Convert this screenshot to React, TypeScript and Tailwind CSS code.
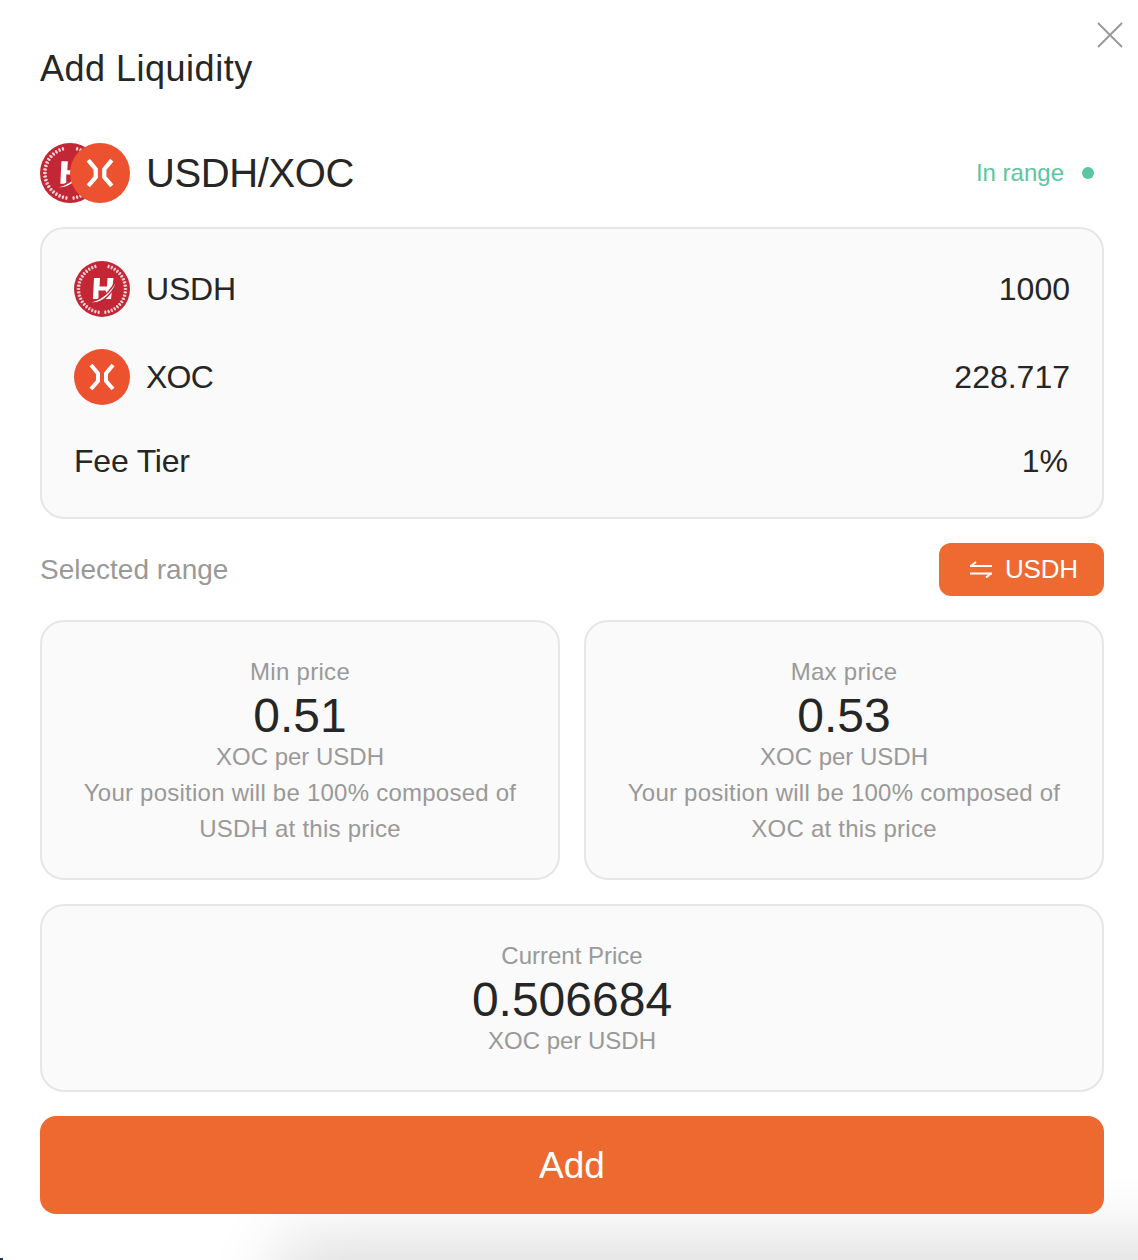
const UsdhIcon = ({ size }: { size: number }) => {
  const dots = Array.from({ length: 44 }, (_, i) => (i * 360) / 44).filter((a) => a > 14 && a < 346 && Math.abs(a - 180) > 5);
  return (
    <svg width={size} height={size} viewBox="0 0 56 56" className="shrink-0">
      <circle cx="28" cy="28" r="28" fill="#c32735" />
      {dots.map((a) => (
        <ellipse key={a} cx="28" cy="4.500" rx="1.100" ry="1.900" fill="#fff" opacity="0.8" transform={`rotate(${a} 28 28)`} />
      ))}
      <path d="M20 17h6l-0.500 8.500h7.500L33.500 17h6l-2.500 21h-5.500l0.500-8.500h-7.500L24.500 38H19z" fill="#fff" />
      <path d="M13 41C25 41 38 31 44 15 42 30 28 46 13 41z" fill="#fff" stroke="#c32735" strokeWidth="1.500" />
    </svg>
  );
};

const XocIcon = ({ size }: { size: number }) => (
  <svg width={size} height={size} viewBox="0 0 56 56" className="shrink-0">
    <circle cx="28" cy="28" r="28" fill="#ec5130" />
    <path d="M17 16l7 8.500v7.500l-7 8M39 16l-7 8.500v7.500l7 8" fill="none" stroke="#fff" strokeWidth="4" />
  </svg>
);

const PriceCard = ({ label, value, note }: { label: string; value: string; note: string }) => (
  <div className="h-[260px] flex-1 rounded-3xl border-2 border-[#e6e6e6] bg-[#fafafa] pt-8 text-center text-[24px] leading-9 text-[#999999]">
    <div className="tracking-[0.3px]">{label}</div>
    <div className="mt-[2px] h-[47px] text-[48px] leading-[48px] text-[#262626]">{value}</div>
    <div>XOC per USDH</div>
    <div className="mx-auto w-[450px] tracking-[0.24px]">{note}</div>
  </div>
);

export default function App() {
  return (
    <div
      className="relative h-[1260px] overflow-hidden bg-white pl-10 pr-[34px] pt-12 text-[#262626]"
      style={{ fontFamily: '"Liberation Sans", Arial, sans-serif' }}
    >
      {/* shadow of the page under the modal */}
      <div className="absolute left-[300px] right-[-100px] top-[1262px] h-[100px] shadow-[0_0_70px_20px_rgba(0,0,0,0.14)]" />
      <div className="absolute bottom-0 left-0 h-[2px] w-[3px] bg-[#2a3a4a]" />

      <button className="absolute right-[15px] top-[22px]">
        <svg width="26" height="26" viewBox="0 0 26 26" className="block">
          <path d="M1 1l24 24M25 1L1 25" stroke="#999999" strokeWidth="2" />
        </svg>
      </button>

      <h1 className="h-10 pt-px text-[36px] leading-10 tracking-[0.5px]">Add Liquidity</h1>

      <div className="relative mt-[55px] flex h-[60px] items-center justify-between pr-[10px]">
        <div className="flex items-center">
          <UsdhIcon size={60} />
          <div className="-ml-[30px]">
            <XocIcon size={60} />
          </div>
          <span className="ml-4 text-[40px] tracking-[-0.4px]">USDH/XOC</span>
        </div>
        <div className="flex items-center gap-[18px] text-[24px] text-[#5cc6a0]">
          <span>In range</span>
          <span className="h-3 w-3 rounded-full bg-[#5cc6a0]" />
        </div>
      </div>

      <div className="relative mt-6 h-[292px] rounded-3xl border-2 border-[#e6e6e6] bg-[#fafafa] px-8 pb-9 pt-8 text-[32px]">
        <div className="flex h-14 items-center justify-between">
          <div className="flex items-center gap-4">
            <UsdhIcon size={56} />
            <span className="tracking-[-0.2px]">USDH</span>
          </div>
          <span>1000</span>
        </div>
        <div className="mt-8 flex h-14 items-center justify-between">
          <div className="flex items-center gap-4">
            <XocIcon size={56} />
            <span className="tracking-[-0.8px]">XOC</span>
          </div>
          <span>228.717</span>
        </div>
        <div className="mt-9 flex h-10 items-center justify-between">
          <span className="tracking-[-0.2px]">Fee Tier</span>
          <span className="pr-0.5">1%</span>
        </div>
      </div>

      <div className="relative mt-6 flex h-[53px] items-center justify-between">
        <span className="text-[28px] text-[#999999]">Selected range</span>
        <button className="flex h-[53px] w-[165px] items-center gap-[13px] rounded-xl bg-[#ef6a31] pl-[31px] text-[26px] tracking-[-0.2px] text-white">
          <svg width="22" height="17" viewBox="0 0 22 17" fill="none" stroke="#fff" strokeWidth="2">
            <path d="M0 5h22M1 5l5-4M0 12.500h22M21 12.500l-5 4" />
          </svg>
          <span>USDH</span>
        </button>
      </div>

      <div className="relative mt-6 flex gap-6">
        <PriceCard label="Min price" value="0.51" note="Your position will be 100% composed of USDH at this price" />
        <PriceCard label="Max price" value="0.53" note="Your position will be 100% composed of XOC at this price" />
      </div>

      <div className="relative mt-6 h-[188px] rounded-3xl border-2 border-[#e6e6e6] bg-[#fafafa] pt-8 text-center text-[24px] leading-9 text-[#999999]">
        <div>Current Price</div>
        <div className="mt-[2px] h-[47px] text-[48px] leading-[48px] text-[#262626]">0.506684</div>
        <div>XOC per USDH</div>
      </div>

      <button className="relative mt-6 h-[98px] w-full rounded-2xl bg-[#ee692f] pt-0.5 text-[37px] text-white">Add</button>
    </div>
  );
}
